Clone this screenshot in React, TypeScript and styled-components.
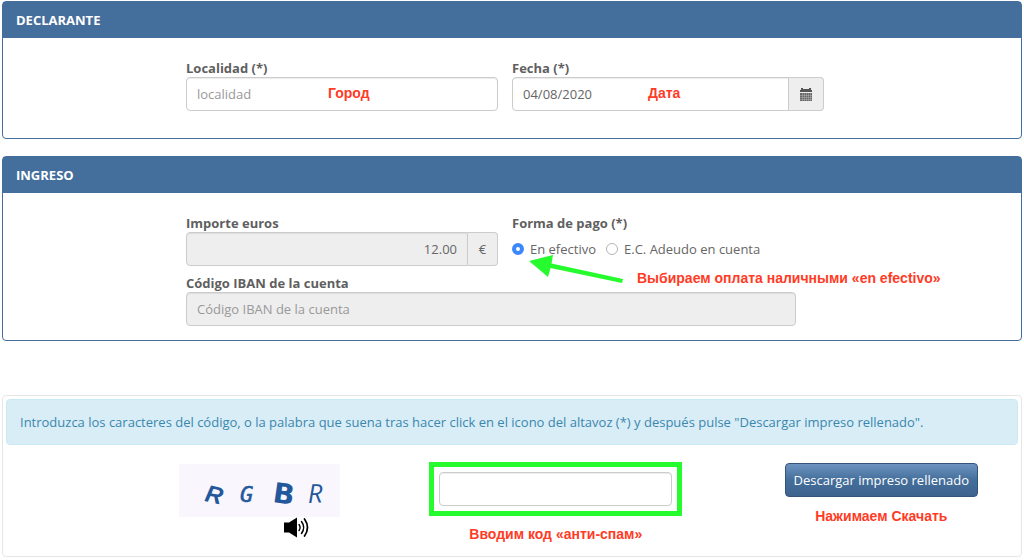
import React from "react";
import styled, { createGlobalStyle, css } from "styled-components";

const GlobalStyle = createGlobalStyle`
  * { box-sizing: border-box; }
  body {
    margin: 0;
    background: #fff;
    color: #666;
    font: 13px/18px "Open Sans", "Noto Sans", sans-serif;
  }
  input, button { font: inherit; color: inherit; margin: 0; }
`;

const Page = styled.main`
  display: flex;
  flex-direction: column;
  gap: 17px;
  padding: 1px 2px 3px;
`;

const Panel = styled.section`
  border: 1px solid #446e9b;
  border-radius: 4px;
  background: #fff;
`;

const PanelTitle = styled.h2`
  margin: 0;
  padding: 9px 13px;
  background: #446e9b;
  color: #fff;
  font-size: 13px;
  font-weight: 700;
  line-height: 18px;
`;

const FormGrid = styled.div<{ $bottom: number }>`
  display: grid;
  grid-template-columns: 1fr 1fr;
  gap: 8px 14px;
  padding: 21px 197px ${(p) => p.$bottom}px 183px;
`;

const Field = styled.div<{ $wide?: boolean }>`
  position: relative;
  display: flex;
  flex-direction: column;
  ${(p) => p.$wide && css`
    grid-column: 1 / -1;
    margin-right: 28px;
  `}
`;

const labelText = css`
  color: #5f5f5f;
  font-size: 13px;
  font-weight: 700;
  line-height: 18px;
`;

const Label = styled.label`
  ${labelText}
`;

const InputGroup = styled.div`
  display: flex;
`;

const TextInput = styled.input<{ $joined?: boolean; $right?: boolean }>`
  width: 100%;
  min-width: 0;
  height: 34px;
  padding: 0 10px;
  border: 1px solid #ccc;
  border-radius: ${(p) => (p.$joined ? "4px 0 0 4px" : "4px")};
  background: #fff;
  box-shadow: inset 0 1px 1px rgba(0, 0, 0, 0.075);
  text-align: ${(p) => (p.$right ? "right" : "left")};
  outline: none;
  &::placeholder { color: #999; opacity: 1; }
  &:disabled, &:read-only { background: #eee; }
`;

const addon = css`
  display: flex;
  flex: none;
  align-items: center;
  justify-content: center;
  padding: 0;
  border: 1px solid #ccc;
  border-left: 0;
  border-radius: 0 4px 4px 0;
  background: #eee;
`;

const Unit = styled.span`
  ${addon}
  width: 30px;
`;

const CalendarButton = styled.button`
  ${addon}
  width: 35px;
`;

const PaymentSet = styled.fieldset`
  position: relative;
  z-index: 1;
  min-width: 0;
  margin: 0;
  padding: 0;
  border: 0;
`;

const Legend = styled.legend`
  ${labelText}
  padding: 0;
`;

const RadioRow = styled.div`
  display: flex;
  gap: 10px;
  padding-top: 8px;
`;

const RadioLabel = styled.label`
  display: flex;
  align-items: center;
  gap: 6px;
  white-space: nowrap;
`;

const Radio = styled.input`
  appearance: none;
  width: 12px;
  height: 12px;
  border: 1px solid #b5b5b5;
  border-radius: 50%;
  background: #fff;
  &:checked { border: 4px solid #3b88fd; }
`;

const Note = styled.span`
  color: #ff3b26;
  font: 700 14px/18px "Liberation Sans", Arial, sans-serif;
  white-space: nowrap;
`;

const OverlayNote = styled(Note)<{ $left: number; $top: number }>`
  position: absolute;
  left: ${(p) => p.$left}px;
  top: ${(p) => p.$top}px;
  pointer-events: none;
`;

const Arrow = styled.svg`
  position: absolute;
  left: 16px;
  top: 20px;
  pointer-events: none;
`;

const Card = styled.section`
  margin-top: 37px;
  padding: 3px;
  border: 1px solid #e6e6e6;
  border-radius: 4px;
`;

const Alert = styled.p`
  margin: 0;
  padding: 13px;
  border: 1px solid #c8ebf3;
  border-radius: 4px;
  background: #d9edf7;
  color: #3a87ad;
`;

const VerifyRow = styled.div`
  display: grid;
  grid-template-columns: 11fr 253px 13fr;
  align-items: start;
  padding: 17px 40px 10px 173px;
`;

const CaptchaBlock = styled.div`
  display: flex;
  flex-direction: column;
  width: 161px;
  padding-top: 2px;
`;

const CaptchaImage = styled.svg`
  display: block;
  background: #f9f7fd;
`;

const SoundButton = styled.button`
  align-self: flex-end;
  display: flex;
  margin-right: 31px;
  padding: 0;
  border: 0;
  background: none;
`;

const Column = styled.div<{ $gap: number }>`
  display: flex;
  flex-direction: column;
  align-items: center;
  justify-self: end;
  gap: ${(p) => p.$gap}px;
`;

const Highlight = styled.div`
  width: 253px;
  padding: 5px;
  border: 5px solid #25fb2d;
`;

const Download = styled.button`
  height: 34px;
  margin-top: 1px;
  padding: 0 8px;
  border: 1px solid #345578;
  border-radius: 4px;
  background: linear-gradient(#6d94bf, #446e9b 50%, #3e648d);
  color: #fff;
  white-space: nowrap;
`;

const CalendarIcon = () => (
  <svg width="12" height="13" viewBox="0 0 12 13" aria-hidden="true">
    <path d="M0 2h1V0h2v1h6V0h2v2h1v2H0z" fill="#555" />
    <path d="M0 5h12v8H0z" fill="#666" />
    <path d="M0 7.5h12M0 9.5h12M0 11.5h12M2.5 5v8M4.5 5v8M6.5 5v8M8.5 5v8M10.5 5v8" stroke="#b5b5b5" strokeWidth=".5" />
  </svg>
);

const SpeakerIcon = () => (
  <svg width="26" height="21" viewBox="0 0 26 21" aria-hidden="true">
    <path d="M1 5.5h5l8-5v20l-8-5H1z" fill="#000" />
    <g fill="none" stroke="#000" strokeLinecap="round">
      <path d="M16 7.5q2.2 3 0 6" strokeWidth="1.4" />
      <path d="M18.5 4.5q4.4 6 0 12" strokeWidth="1.5" />
      <path d="M21.5 2q6 8.5 0 17" strokeWidth="1.7" />
    </g>
  </svg>
);

export default function App() {
  return (
    <>
      <GlobalStyle />
      <Page>
        <Panel>
          <PanelTitle>DECLARANTE</PanelTitle>
          <FormGrid $bottom={27}>
            <Field>
              <Label htmlFor="localidad">Localidad (*)</Label>
              <TextInput id="localidad" placeholder="localidad" />
              <OverlayNote $left={142} $top={25}>Город</OverlayNote>
            </Field>
            <Field>
              <Label htmlFor="fecha">Fecha (*)</Label>
              <InputGroup>
                <TextInput id="fecha" defaultValue="04/08/2020" $joined />
                <CalendarButton type="button" aria-label="Fecha">
                  <CalendarIcon />
                </CalendarButton>
              </InputGroup>
              <OverlayNote $left={136} $top={25}>Дата</OverlayNote>
            </Field>
          </FormGrid>
        </Panel>

        <Panel>
          <PanelTitle>INGRESO</PanelTitle>
          <FormGrid $bottom={14}>
            <Field>
              <Label htmlFor="importe">Importe euros</Label>
              <InputGroup>
                <TextInput id="importe" defaultValue="12.00" readOnly $joined $right />
                <Unit>€</Unit>
              </InputGroup>
            </Field>
            <PaymentSet>
              <Legend>Forma de pago (*)</Legend>
              <RadioRow>
                <RadioLabel>
                  <Radio type="radio" name="pago" defaultChecked />
                  En efectivo
                </RadioLabel>
                <RadioLabel>
                  <Radio type="radio" name="pago" />
                  E.C. Adeudo en cuenta
                </RadioLabel>
              </RadioRow>
              <Arrow width="96" height="34" viewBox="0 0 96 34" aria-hidden="true">
                <path d="M1 9L25 3L23.5 11.5L95 27L94 31L22.5 16L20 25z" fill="#25fb2d" />
              </Arrow>
              <OverlayNote $left={125} $top={37}>
                Выбираем оплата наличными «en efectivo»
              </OverlayNote>
            </PaymentSet>
            <Field $wide>
              <Label htmlFor="iban">Código IBAN de la cuenta</Label>
              <TextInput id="iban" placeholder="Código IBAN de la cuenta" disabled />
            </Field>
          </FormGrid>
        </Panel>

        <Card>
          <Alert>
            Introduzca los caracteres del código, o la palabra que suena tras hacer click en el icono
            del altavoz (*) y después pulse "Descargar impreso rellenado".
          </Alert>
          <VerifyRow>
            <CaptchaBlock>
              <CaptchaImage width="161" height="53" viewBox="0 0 161 53" role="img">
                <g fill="#23589c">
                  <text transform="translate(25 37) rotate(12)" fontFamily="Liberation Sans" fontWeight="700" fontStyle="italic" fontSize="24">R</text>
                  <text transform="translate(61 38)" fontFamily="DejaVu Sans Mono" fontStyle="italic" fontSize="22" stroke="#23589c" strokeWidth=".6">G</text>
                  <text transform="translate(93 38) rotate(8)" fontFamily="DejaVu Sans" fontWeight="700" fontSize="28">B</text>
                  <text transform="translate(129 39) rotate(-2)" fontFamily="Open Sans" fontStyle="italic" fontSize="26">R</text>
                </g>
              </CaptchaImage>
              <SoundButton type="button" aria-label="Altavoz">
                <SpeakerIcon />
              </SoundButton>
            </CaptchaBlock>
            <Column $gap={9}>
              <Highlight>
                <TextInput aria-label="Código" />
              </Highlight>
              <Note>Вводим код «анти-спам»</Note>
            </Column>
            <Column $gap={10}>
              <Download type="button">Descargar impreso rellenado</Download>
              <Note>Нажимаем Скачать</Note>
            </Column>
          </VerifyRow>
        </Card>
      </Page>
    </>
  );
}
